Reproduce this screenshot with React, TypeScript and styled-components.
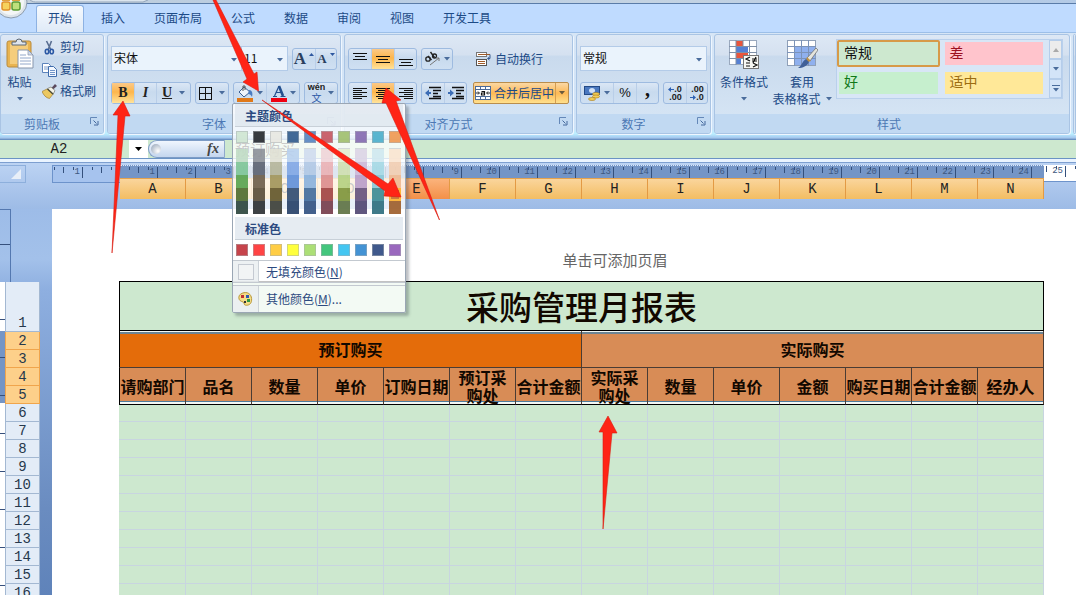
import React from "react";
import styled, { createGlobalStyle, css } from "styled-components";

const UI = `"Noto Sans CJK SC", "Noto Sans", sans-serif`;
const MONO = `"Liberation Mono", "Noto Sans CJK SC", monospace`;
const NAVY = "#1c4a86";
const GREEN = "#cde8cf";

const Global = createGlobalStyle`
  * { box-sizing: border-box; }
  body { margin: 0; overflow: hidden; font: 12px/16px ${UI}; color: ${NAVY}; background: #a5c2ea; }
  button, input, select { font: inherit; color: inherit; margin: 0; padding: 0; border: 0; background: none; border-radius: 0; }
  button { display: flex; align-items: center; justify-content: center; cursor: pointer; }
  svg { display: block; flex: none; }
`;

const Shell = styled.div`
  height: 100vh;
  display: flex;
  flex-direction: column;
  overflow: hidden;
  position: relative;
`;

/* ---------- title and tabs ---------- */
const TitleStrip = styled.div`
  height: 4px;
  flex: none;
  background: linear-gradient(90deg, #c3cfd9, #b7cce4 30%, #c4d3e2 60%, #b3cae6);
  border-bottom: 1px solid #5a7ca8;
`;
const OfficeOrb = styled.div`
  position: absolute;
  left: 0;
  top: 0;
`;
const Tabs = styled.nav`
  flex: none;
  height: 28px;
  display: flex;
  align-items: flex-end;
  gap: 5px;
  padding: 1px 0 0 36px;
  background: #bfdbff;
`;
const Tab = styled.button<{ $active?: boolean }>`
  height: 27px;
  padding: 0 12px 2px;
  border-radius: 3px 3px 0 0;
  ${(p) =>
    p.$active &&
    css`
      background: linear-gradient(#f6fafe, #dfeaf7);
      border: 1px solid #8db2e3;
      border-bottom: 0;
      padding: 0 11px 2px;
    `}
`;

/* ---------- ribbon ---------- */
const Ribbon = styled.div`
  flex: none;
  height: 107px;
  display: flex;
  align-items: flex-start;
  gap: 3px;
  padding-top: 1px;
  border-top: 1px solid #9cbfe8;
  border-bottom: 1px solid #8fb2dc;
  background: linear-gradient(#d7e6f6, #cfe3f8 90%, #bcefff 96%, #a3c6ee);
`;
const Group = styled.section<{ $w: number; $grow?: boolean }>`
  flex: ${(p) => (p.$grow ? 1 : 0)} 0 ${(p) => p.$w}px;
  height: 100px;
  display: flex;
  flex-direction: column;
  border: 1px solid #a9c4e4;
  border-radius: 3px;
  background: linear-gradient(#dde8f5, #d5e1f0 20%, #c9daed 22%, #d8e7f6);
  box-shadow: 1px 1px 0 #eef6ff;
  overflow: hidden;
`;
const GroupBody = styled.div`
  flex: 1;
  display: flex;
  padding: 11px 3px 0;
`;
const GroupLabel = styled.div`
  flex: none;
  height: 19px;
  display: flex;
  align-items: center;
  background: #c1d9f2;
  color: #4c78b4;
  span { flex: 1; text-align: center; padding-right: 6px; }
`;
const Launcher = styled.button`
  width: 11px;
  height: 11px;
  margin: 0 3px 4px 0;
`;
const Stack = styled.div`
  display: flex;
  flex-direction: column;
  gap: 11px;
`;
const Line = styled.div`
  display: flex;
  align-items: center;
  gap: 4px;
  height: 25px;
  & + & { height: 22px; }
`;
const ButtonSet = styled.div`
  display: flex;
  height: 22px;
  border: 1px solid #9ebbe0;
  border-radius: 3px;
  background: linear-gradient(#dbe7f5, #c8daee 45%, #cfe0f2);
  > * + * { border-left: 1px solid #b9cee8; }
`;
const Tool = styled.button<{ $w: number; $on?: boolean }>`
  width: ${(p) => p.$w}px;
  gap: 3px;
  background: ${(p) => (p.$on ? "linear-gradient(#fbc988, #fdb64c 45%, #ffe39a)" : "none")};
`;
const Letter = styled.span<{ $v: "b" | "i" | "u" }>`
  font: 14px/16px "Liberation Serif", serif;
  font-weight: bold;
  color: #222;
  ${(p) => p.$v === "i" && "font-style: italic;"}
  ${(p) => p.$v === "u" && "text-decoration: underline;"}
`;
const ComboWrap = styled.label<{ $w: number }>`
  position: relative;
  display: flex;
  width: ${(p) => p.$w}px;
  height: 25px;
  border: 1px solid #b3cbe8;
  background: #eaf3fc;
  & + & { margin-left: -4px; border-left: 0; }
  & + & select { padding-left: 4px; }
  svg { position: absolute; right: 4px; top: 11px; pointer-events: none; }
`;
const Combo = styled.select`
  appearance: none;
  width: 100%;
  padding: 0 2px 2px;
  color: #111;
`;
const Side = styled.div`
  display: flex;
  flex-direction: column;
  align-items: flex-start;
  gap: 6px;
`;
const TextTool = styled.button`
  height: 16px;
  gap: 3px;
  justify-content: flex-start;
`;
const BigTool = styled.button<{ $w: number }>`
  width: ${(p) => p.$w}px;
  flex-direction: column;
  justify-content: flex-start;
  line-height: 17px;
  span { display: flex; align-items: center; gap: 5px; min-height: 17px; white-space: nowrap; }
  svg + span { margin-top: 4px; }
`;
const VRule = styled.div`
  width: 1px;
  height: 56px;
  margin: 1px 3px 0;
  background: #eff6fd;
`;
const MergeTool = styled.div`
  display: flex;
  width: 96px;
  height: 22px;
  border: 1px solid #b98d4c;
  border-radius: 2px;
  background: linear-gradient(#fbd8a4, #fdb956 50%, #ffe08c);
  button { gap: 3px; }
  button:first-child { flex: 1; }
  button:last-child { width: 13px; border-left: 1px solid #d59d50; }
`;
const WrapTool = styled(TextTool)`
  height: 25px;
  padding-left: 3px;
`;
const Gallery = styled.div`
  display: flex;
  flex: 1 1 auto;
  max-width: 227px;
  height: 60px;
  margin-left: 3px;
  border: 1px solid #b9d0ec;
  background: #d8e6f6;
`;
const GalleryGrid = styled.div`
  flex: 1;
  display: grid;
  grid-template-columns: 1fr 1fr;
  gap: 3px;
  padding: 0 4px 2px 0;
`;
const StyleCell = styled.button<{ $bg: string; $fg: string; $on?: boolean }>`
  justify-content: flex-start;
  padding: 0 0 3px 5px;
  font-size: 14px;
  line-height: 18px;
  background: ${(p) => p.$bg};
  background-clip: padding-box;
  color: ${(p) => p.$fg};
  border: ${(p) => (p.$on ? "2px solid #d79a48" : "2px solid transparent")};
  border-radius: 2px;
`;
const GalleryScroll = styled.div`
  width: 13px;
  display: grid;
  grid-template-rows: repeat(3, 1fr);
  button { border: 1px solid #b5cdea; background: #d3e4f8; }
  button:first-child { background: #ececec; }
`;

/* ---------- formula bar ---------- */
const FormulaBar = styled.div`
  flex: none;
  height: 20px;
  display: flex;
  border: 1px solid #6b93c4;
  border-width: 1px 0;
  background: ${GREEN};
  color: #222;
`;
const NameBox = styled.input`
  width: 129px;
  padding-right: 11px;
  text-align: center;
  font: 14px/18px ${MONO};
`;
const NameDrop = styled.button`
  width: 19px;
  background: #fff;
`;
const FxBar = styled.button`
  width: 77px;
  border-radius: 9px 0 0 9px;
  border: 1px solid #7d9cc6;
  border-right-color: #8fa9cc;
  background: linear-gradient(#f0f6fe, #c4d6ee);
  justify-content: space-between;
  padding: 0 5px 0 2px;
  i { font: italic bold 14px/16px "Liberation Serif", serif; color: #444; }
`;
const Knob = styled.span`
  width: 10px;
  height: 10px;
  border-radius: 50%;
  background: radial-gradient(circle at 70% 70%, #fff, #8f9fb4);
`;
const FormulaInput = styled.input`
  flex: 1;
  min-width: 0;
  padding-left: 10px;
  font: 15px/18px ${UI};
  color: #222;
`;

/* ---------- workspace ---------- */
const HeadArea = styled.div`
  flex: none;
  height: 50px;
  display: grid;
  grid-template-columns: 120px 924px 1fr;
  align-items: start;
  padding-top: 6px;
  background: linear-gradient(#eaf4ff 0 3px, #7d9fd0 3px 4px, #bcd3f3 4px, #9dbbe6);
`;
const HeadLeft = styled.div`
  display: flex;
  justify-content: space-between;
`;
const SelectAll = styled.button`
  width: 26px;
  height: 18px;
  border: 1px solid #8dafdc;
  border-left: 0;
  justify-content: flex-end;
  padding: 0 4px 0 0;
`;
const RulerStrip = styled.div<{ $kind: "left" | "mid" | "right" }>`
  display: flex;
  overflow: hidden;
  ${(p) => p.$kind === "left" && "width: 68px; height: 18px; background: #a6c3ee; border: 1px solid #6d93cb; border-right: 0;"}
  ${(p) => p.$kind === "mid" && "height: 13px; background: #7495c6; border-top: 1px dotted #dce9fa; padding-right: 12px;"}
  ${(p) => p.$kind === "right" && "height: 17px; background: #fff; border-bottom: 1px solid #6d93cb;"}
`;
const RulerUnit = styled.span<{ $w?: number }>`
  flex: none;
  width: ${(p) => p.$w ?? 38}px;
  height: 12px;
  padding-right: 3px;
  text-align: right;
  font: 9px/12px ${MONO};
  color: #3d5880;
  background:
    linear-gradient(#34507c, #34507c) right 0 top 1px / 1px 11px no-repeat,
    linear-gradient(#34507c, #34507c) right 19px top 1px / 1px 6px no-repeat,
    linear-gradient(#34507c, #34507c) right 28px top 1px / 1px 3px no-repeat,
    linear-gradient(#34507c, #34507c) right 9px top 1px / 1px 3px no-repeat;
`;
const ColumnHeads = styled.div`
  display: grid;
  grid-template-columns: repeat(14, 1fr);
  height: 20px;
  border-top: 1px solid #e5a24d;
  border-bottom: 1px solid #e08a38;
`;
const ColumnHead = styled.div<{ $hot?: boolean }>`
  border-right: 1px solid #e39a44;
  text-align: center;
  font: 14px/20px ${MONO};
  color: #222;
  background: ${(p) => (p.$hot ? "linear-gradient(#fbb37c, #f39048)" : "linear-gradient(#fad59c, #f3bd62)")};
`;
const Body = styled.div`
  flex: 1;
  min-height: 0;
  display: flex;
  overflow: hidden;
  background: linear-gradient(#9dbce8, #a3c1ea 50px, #8eafe0 80px, #6a8cc0 300px, #5f83ba);
`;
const Gutter = styled.div`
  flex: none;
  width: 52px;
`;
const TopRuler = styled.div`
  width: 11px;
  height: 73px;
  border: 1px solid #5478b0;
  border-width: 1px 1px 0 0;
  background: linear-gradient(#36507c, #36507c) 0 34px / 11px 1px no-repeat;
`;
const GutterRows = styled.div`
  display: flex;
`;
const SideRuler = styled.div`
  width: 5px;
  background:
    repeating-linear-gradient(transparent 0 37px, #36507c 37px 38px),
    linear-gradient(#fff 0 49px, #7495c6 49px 121px, #fff 121px);
`;
const RowHeads = styled.div`
  width: 35px;
`;
const RowHead = styled.div<{ $on?: boolean; $tall?: boolean }>`
  height: ${(p) => (p.$tall ? 50 : 18)}px;
  display: flex;
  align-items: flex-end;
  justify-content: center;
  font: 14px/15px ${MONO};
  color: #26384c;
  border: 1px solid ${(p) => (p.$on ? "#f0a54c" : "#a3b8d2")};
  border-width: 0 1px 1px;
  background: ${(p) => (p.$on ? "#fdd08a" : "#e3ecf7")};
`;
const Page = styled.main`
  flex: none;
  width: 1126px;
  background: #fff;
  padding-left: 67px;
`;
const PageHeader = styled.div`
  height: 72px;
  margin-left: -67px;
  display: flex;
  align-items: flex-end;
  justify-content: center;
  padding-bottom: 10px;
  font-size: 15px;
  line-height: 22px;
  color: #666;
`;
const Sheet = styled.table`
  table-layout: fixed;
  width: 925px;
  border-collapse: separate;
  border-spacing: 0;
  border-top: 1px solid #000;
  background: ${GREEN};
  color: #120800;
  th, td { padding: 0; }
`;
const TitleCell = styled.th`
  height: 49px;
  border: 1px solid #000;
  border-top: 0;
  font: 500 33px/44px ${UI};
`;
const BandCell = styled.th<{ $main?: boolean }>`
  height: 37px;
  background: ${(p) => (p.$main ? "#e46c0a" : "#d88c56")};
  border: 1px solid #4a3c34;
  border-width: 0 1px 1px 0;
  box-shadow: inset 0 1px 0 #f4f8f4, inset 0 3px 0 #6c8494;
  font: bold 16px/18px ${UI};
  &:first-child { border-left: 1px solid #000; }
`;
const HeadCell = styled.th`
  height: 37px;
  background: #d88c56;
  border: 1px solid #4a3c34;
  border-width: 0 1px 1px 0;
  border-bottom-color: #000;
  box-shadow: inset 0 -2px 0 #f4f8f4, inset 0 -3px 0 #4c7c9c;
  font: bold 16px/18px ${UI};
  vertical-align: top;
  &:first-child { border-left: 1px solid #000; }
`;
const HeadText = styled.div`
  display: flex;
  flex-direction: column;
  align-items: center;
  justify-content: center;
  height: 36px;
  white-space: nowrap;
`;
const EmptyCell = styled.td<{ $first?: boolean }>`
  height: ${(p) => (p.$first ? 17 : 18)}px;
  border: 1px solid #c8d5e0;
  border-width: 0 1px 1px 0;
`;

/* ---------- colour menu ---------- */
const Menu = styled.div`
  position: absolute;
  left: 232px;
  top: 103px;
  width: 174px;
  border: 1px solid #9aa6b4;
  border-radius: 2px;
  background: rgba(255, 255, 255, 0.76);
  box-shadow: 3px 3px 3px rgba(60, 70, 80, 0.35);
  color: #2c4a80;
`;
const MenuTitle = styled.div`
  height: 23px;
  padding-left: 10px;
  margin: 0 2px;
  font-weight: bold;
  line-height: 23px;
  background: rgba(222, 230, 238, 0.75);
  border-bottom: 1px solid #c8d0d8;
`;
const SwatchRow = styled.div`
  display: grid;
  grid-template-columns: repeat(10, 12px);
  column-gap: 5px;
  padding: 4px 3px;
`;
const ShadeRow = styled(SwatchRow)`
  padding: 1px 3px 3px;
`;
const Swatch = styled.button<{ $c: string; $h?: number; $pick?: boolean }>`
  height: ${(p) => p.$h ?? 12}px;
  width: 12px;
  background: ${(p) => p.$c};
  opacity: 0.9;
  ${(p) => !p.$h && "border: 1px solid rgba(160, 165, 170, 0.5);"}
  ${(p) => p.$pick && "border: 2px solid #ffb02a;"}
`;
const Shades = styled.div`
  border-top: 1px solid rgba(190, 195, 200, 0.6);
  width: 12px;
`;
const MenuItem = styled.button<{ $h: number }>`
  width: 100%;
  height: ${(p) => p.$h}px;
  justify-content: flex-start;
  border-top: 1px solid #c3c9d0;
  u { text-underline-offset: 1px; }
`;
const MenuIcon = styled.span`
  display: flex;
  align-items: center;
  justify-content: center;
  align-self: stretch;
  width: 26px;
  margin-right: 7px;
  border-right: 1px solid #ccd2d8;
  background: rgba(232, 238, 240, 0.8);
`;
const NoFill = styled.span`
  width: 16px;
  height: 16px;
  border: 1px solid #c5cad2;
  background: #f2f4f5;
`;
const MenuGap = styled.div`
  height: 3px;
  border-top: 1px solid #c3c9d0;
`;
const Pointers = styled.svg`
  position: absolute;
  left: 0;
  top: 0;
  pointer-events: none;
`;

/* ---------- drawings ---------- */
const Caret = ({ c = "#4a6c9c" }: { c?: string }) => (
  <svg width="6" height="4" viewBox="0 0 6 4"><path d="M0 0h6L3 3.5z" fill={c} /></svg>
);
const VLines = ({ y }: { y: number }) => (
  <svg width="14" height="16" viewBox="0 0 14 16" shapeRendering="crispEdges" stroke="#111">
    <path d={`M0 ${y}.5h14M2 ${y + 3}.5h10M0 ${y + 6}.5h14`} />
  </svg>
);
const HLines = ({ a }: { a: "l" | "c" | "r" }) => {
  const x = a === "l" ? 0 : a === "c" ? 2 : 5;
  const w = a === "c" ? 10 : 9;
  return (
    <svg width="14" height="14" viewBox="0 0 14 14" shapeRendering="crispEdges">
      {[0, 1, 2, 3, 4, 5].map((i) => (
        <rect key={i} x={i % 2 ? x : 0} y={2 + i * 2} width={i % 2 ? w : 14} height="1" fill="#111" />
      ))}
    </svg>
  );
};
const Indent = ({ flip }: { flip?: boolean }) => (
  <svg width="16" height="14" viewBox="0 0 16 14">
    <path d="M4 1.5h12M8 4.5h8M8 7.500h5M8 10.500h8M4 12.500h12" stroke="#111" strokeWidth="1.300" />
    <path d={flip ? "M0 6h2V3.500l4 3.500-4 3.500V8H0z" : "M6 6H4V3.500L0 7l4 3.500V8h2z"} fill="#3b6cb5" />
  </svg>
);
const LauncherIcon = () => (
  <svg width="9" height="9" viewBox="0 0 9 9" fill="none" stroke="#6488b8">
    <path d="M.5 7V.5H7" /><path d="M3.500 3.500l3 3M8 4v4H4" stroke="#44689c" />
  </svg>
);
const PasteIcon = () => (
  <svg width="28" height="31" viewBox="0 0 28 31">
    <rect x="1" y="3" width="24" height="26" rx="2" fill="#e9b450" stroke="#b98a3c" />
    <rect x="4" y="6" width="18" height="20" fill="#f5cd7c" />
    <path d="M6 7V4h4a3 3 0 0 1 6 0h4v3z" fill="#dfe5ec" stroke="#5c6876" />
    <path d="M12 12h10l5 5v13H12z" fill="#fff" stroke="#8695ac" />
    <path d="M22 12v5h5z" fill="#cfd9ea" stroke="#8695ac" strokeWidth=".7" />
    <path d="M14 17h6M14 20h11M14 23h11M14 26h11" stroke="#93a8ca" />
  </svg>
);
const CutIcon = () => (
  <svg width="15" height="15" viewBox="0 0 15 15" fill="none">
    <path d="M4.500 1l4.500 9M9.500 1L6 10" stroke="#5a6f92" strokeWidth="1.600" />
    <ellipse cx="5" cy="11.500" rx="1.700" ry="2.300" stroke="#2b58a4" strokeWidth="1.600" /><ellipse cx="9.700" cy="11.500" rx="1.700" ry="2.300" stroke="#2b58a4" strokeWidth="1.600" />
  </svg>
);
const CopyIcon = () => (
  <svg width="15" height="15" viewBox="0 0 15 15">
    <path d="M.5 1.500h6l2 2v7h-8z" fill="#fff" stroke="#5c83bb" /><path d="M2 5h4M2 7h4" stroke="#7f9fcc" />
    <path d="M6.500 4.500h5l3 3v7h-8z" fill="#f3f8ff" stroke="#3f6cac" /><path d="M8 8.500h5M8 10.500h5M8 12.500h5" stroke="#6f94c8" />
  </svg>
);
const BrushIcon = () => (
  <svg width="15" height="15" viewBox="0 0 15 15">
    <path d="M9 4.500L13 0l2 2-4.500 4z" fill="#5a4a5e" />
    <path d="M0 7.500L5 5l6 5-3.500 4.500C4 14 1.500 11 0 7.500z" fill="#ecc860" stroke="#a08038" strokeWidth=".7" />
    <path d="M5.500 4.500L9 3l4 3.500-2 4z" fill="#f4f2e6" stroke="#77776c" strokeWidth=".7" />
    <path d="M5.500 5l5.500 5" stroke="#4c4c38" strokeWidth="1.300" />
  </svg>
);
const GridIcon = () => (
  <svg width="13" height="13" viewBox="0 0 13 13" fill="none" stroke="#111" shapeRendering="crispEdges"><path d="M.5.5h12v12H.5zM6.500 0v13M0 6.500h13" /></svg>
);
const BucketIcon = () => (
  <svg width="17" height="17" viewBox="0 0 17 17">
    <path d="M2 7l5-5 6 5-6 5z" fill="#eef4fb" stroke="#3d5f92" /><path d="M6 6V1h2v4" fill="none" stroke="#555" />
    <path d="M12 5c3 0 4 3 3 7-1-2-2-3-4-3z" fill="#4a7bc0" /><rect y="13" width="16" height="4" fill="#e07818" />
  </svg>
);
const FontColorIcon = () => (
  <svg width="16" height="17" viewBox="0 0 16 17"><path d="M3.500 11L8 1" fill="none" stroke="#24508f" strokeWidth="1.200" /><path d="M8 1l4 10" stroke="#24508f" strokeWidth="2.600" /><path d="M5 7.500h6M2 11.500h4M9.500 11.500h5" stroke="#24508f" /><rect y="13" width="16" height="4" fill="#f00010" /></svg>
);
const SizeA = styled.span<{ $s: number }>`
  font: bold ${(p) => p.$s}px/18px "Liberation Serif", serif;
  color: #2b3f5e;
`;
const Tick = ({ up }: { up?: boolean }) => (
  <svg width="5" height="12" viewBox="0 0 5 12"><path d={up ? "M0 3h5L2.500 0z" : "M0 0h5L2.500 3z"} fill="#2e58a0" /></svg>
);
const WenMark = styled.span`
  display: flex;
  flex-direction: column;
  align-items: center;
  font-size: 10px;
  line-height: 11px;
  color: #2c57a5;
  b { font: bold 9px/9px "Liberation Sans", sans-serif; color: #222; }
`;
const OrientIcon = () => (
  <svg width="17" height="16" viewBox="0 0 17 16" fill="none" stroke="#222">
    <circle cx="4" cy="8" r="2.200" strokeWidth="1.300" /><path d="M4 5l3.500 4M6.500 1l4 5.500" strokeWidth="1.400" /><circle cx="10.500" cy="5" r="2" strokeWidth="1.300" />
    <path d="M6 14l9-7M15 7h-3M15 7v3" stroke="#777" />
  </svg>
);
const WrapIcon = () => (
  <svg width="16" height="16" viewBox="0 0 16 16" fill="none">
    <rect x=".5" y="1.500" width="10" height="4" fill="#fff" stroke="#777" /><rect x=".5" y="8.500" width="10" height="6" fill="#fff" stroke="#555" />
    <path d="M2 3.500h12M2 10.500h7M2 12.500h7" stroke="#a05a28" /><path d="M14 3.500v4h-2M13.500 6l-2 1.500 2 1.500" stroke="#3a5c90" />
  </svg>
);
const MergeIcon = () => (
  <svg width="16" height="14" viewBox="0 0 16 14" fill="none">
    <rect x=".5" y=".5" width="15" height="13" fill="#fff" stroke="#4d6b98" /><path d="M0 3.500h16M0 10.500h16M5.500 0v3M10.500 0v3M5.500 11v3M10.500 11v3" stroke="#4d6b98" />
    <path d="M1 7h3M12 7h3M3 5.500L4.500 7 3 8.500M13 5.500L11.500 7 13 8.500" stroke="#222" /><path d="M6.500 5.500h3v3.500h-3v-2h3" stroke="#111" strokeWidth="1.200" />
  </svg>
);
const MoneyIcon = () => (
  <svg width="17" height="16" viewBox="0 0 17 16">
    <rect x=".5" y="1.500" width="15" height="8" fill="#4a78bf" stroke="#244a86" /><ellipse cx="8" cy="5.500" rx="3" ry="2.500" fill="#cfe0f6" />
    <ellipse cx="12" cy="9" rx="3.500" ry="1.500" fill="#f3cf5a" stroke="#a87a18" strokeWidth=".6" /><ellipse cx="12" cy="11.500" rx="3.500" ry="1.500" fill="#f3cf5a" stroke="#a87a18" strokeWidth=".6" /><ellipse cx="8" cy="14" rx="3.500" ry="1.500" fill="#f3cf5a" stroke="#a87a18" strokeWidth=".6" />
  </svg>
);
const Decimal = styled.span`
  display: flex;
  flex-direction: column;
  align-items: flex-end;
  font: bold 9px/8px "Liberation Sans", sans-serif;
  color: #222;
  span { display: flex; align-items: center; }
`;
const MiniArrow = ({ right }: { right?: boolean }) => (
  <svg width="6" height="5" viewBox="0 0 6 5"><path d={right ? "M0 2h3V0l3 2.500L3 5V3H0z" : "M6 2H3V0L0 2.500 3 5V3h3z"} fill="#2e62b4" /></svg>
);
const CondIcon = () => (
  <svg width="30" height="29" viewBox="0 0 30 29">
    <rect x=".5" y=".5" width="27" height="24" fill="#fff" stroke="#9aa9be" />
    <rect x="7" y="1" width="7" height="5" fill="#e8553c" /><rect x="7" y="7" width="12" height="5" fill="#5580d4" /><rect x="7" y="13" width="12" height="5" fill="#e8553c" /><rect x="7" y="19" width="5" height="5" fill="#5580d4" />
    <path d="M0 6.500h28M0 12.500h28M0 18.500h28M7 0v25M14 0v7M20.500 0v25" stroke="#7f90a8" fill="none" />
    <rect x="14.500" y="15.500" width="15" height="13" fill="#f8f8f4" stroke="#777" />
    <path d="M21 17l-4 2 4 2M17 23h4M17 26h4M23 19h5M23 21h5M27 17l-3 6M24 23l4 2-4 2" stroke="#111" fill="none" strokeWidth="1.200" />
  </svg>
);
const FormatTableIcon = () => (
  <svg width="31" height="29" viewBox="0 0 31 29">
    <rect x=".5" y=".5" width="28" height="25" fill="#fff" stroke="#8fa0b8" /><rect x="8" y="7" width="20" height="18" fill="#8fb0ee" />
    <path d="M0 6.500h29M0 12.500h29M0 18.500h29M7.500 0v26M14.500 0v26M21.500 0v26" stroke="#7c93b8" fill="none" />
    <path d="M29 8l2 2-8 11-3-3z" fill="#e4e4dc" stroke="#666" strokeWidth=".7" /><path d="M20 17l4 4-3 1-2-2z" fill="#c09040" /><path d="M19 19l3 3c-2 4-6 6-11 6 4-2 4-7 8-9z" fill="#3f5f98" />
  </svg>
);
const PaletteIcon = () => (
  <svg width="15" height="14" viewBox="0 0 15 14">
    <path d="M6 .7c5-1 8 3 7.600 7.500-.3 4-3 5.300-6 5-2-.2-1-2.500-2.500-3.200C3 9.300.8 8.500.8 5.500.8 3 3 1.200 6 .7z" fill="#f4dc88" stroke="#b89838" />
    <rect x="3" y="3" width="3" height="3" fill="#c03030" /><rect x="8" y="3" width="3" height="3" fill="#2f5ab0" /><rect x="9" y="7" width="3" height="3" fill="#2f9a40" /><rect x="6" y="9" width="2" height="2" fill="#333" />
  </svg>
);

/* ---------- data ---------- */
const THEME: string[][] = [
  ["#cfe6d2", "#c0dcc5", "#7cc496", "#56a24c", "#4d6a2c", "#29423a"],
  ["#22272c", "#8c9098", "#5a6070", "#6b5c48", "#564a36", "#282c30"],
  ["#e8e8e2", "#e0e0d4", "#b4b498", "#a09458", "#605428", "#3a3c34"],
  ["#2f5a8c", "#b8d0ee", "#7fa6e4", "#5f8fd8", "#2f4a70", "#243e66"],
  ["#5584c0", "#cfdcee", "#b0c8e4", "#88b0dc", "#3f6a9c", "#2f4f80"],
  ["#c65560", "#f0d4d8", "#eab0b4", "#dc8c8c", "#a04040", "#743a48"],
  ["#a0bf6c", "#e2ecd0", "#cfdfb0", "#b4d080", "#7c9438", "#5c7040"],
  ["#8469b0", "#dcd4e6", "#ccb8d8", "#b89cc8", "#64507c", "#4e4470"],
  ["#4aaecb", "#cfe8f0", "#a4d8e4", "#86c8d8", "#3a8a94", "#2a6c7c"],
  ["#f09850", "#fae4d0", "#f2cdb0", "#eeb890", "#c87030", "#9c5c28"],
];
const STANDARD = ["#c03038", "#ff3030", "#ffc830", "#ffff28", "#a4dc68", "#30c070", "#30c0f0", "#3088d0", "#2c4880", "#9058b8"];
const COLS = "ABCDEFGHIJKLMN".split("");
const HEADS = ["请购部门", "品名", "数量", "单价", "订购日期", "预订采\n购处", "合计金额", "实际采\n购处", "数量", "单价", "金额", "购买日期", "合计金额", "经办人"];
const TABS = ["开始", "插入", "页面布局", "公式", "数据", "审阅", "视图", "开发工具"];

const Label = ({ text, plain }: { text: string; plain?: boolean }) => (
  <GroupLabel>
    <span>{text}</span>
    {!plain && <Launcher aria-label={`${text}设置`}><LauncherIcon /></Launcher>}
  </GroupLabel>
);
const Select = ({ w, label, value }: { w: number; label: string; value: string }) => (
  <ComboWrap $w={w}>
    <Combo aria-label={label} defaultValue={value}><option>{value}</option></Combo>
    <Caret />
  </ComboWrap>
);

const ClipArea = styled(GroupBody)`
  gap: 7px;
  padding: 3px 3px 0;
  > div { margin-top: 1px; }
`;
const StyleBody = styled(GroupBody)`
  padding: 4px 6px 0 2px;
  ${BigTool} { margin-top: 1px; }
`;
const Gap = styled.span`
  width: 1px;
`;
const Percent = styled.span`
  font: 13px/16px "Liberation Sans", sans-serif;
  color: #111;
`;
const Comma = styled.span`
  font: bold 20px/10px "Liberation Serif", serif;
  color: #111;
  padding-bottom: 8px;
`;

const RibbonBar = () => (
  <Ribbon>
    <Group $w={104}>
      <ClipArea>
        <BigTool $w={31}><PasteIcon /><span>粘贴</span><span><Caret /></span></BigTool>
        <Side>
          <TextTool><CutIcon />剪切</TextTool>
          <TextTool><CopyIcon />复制</TextTool>
          <TextTool><BrushIcon />格式刷</TextTool>
        </Side>
      </ClipArea>
      <Label text="剪贴板" />
    </Group>

    <Group $w={234}>
      <GroupBody>
        <Stack>
          <Line>
            <Select w={131} label="字体" value="宋体" />
            <Select w={46} label="字号" value="11" />
            <ButtonSet>
              <Tool $w={22} aria-label="增大字号"><SizeA $s={17}>A</SizeA><Tick up /></Tool>
              <Tool $w={21} aria-label="减小字号"><SizeA $s={13}>A</SizeA><Tick /></Tool>
            </ButtonSet>
          </Line>
          <Line>
            <ButtonSet>
              <Tool $w={22} $on aria-label="加粗"><Letter $v="b">B</Letter></Tool>
              <Tool $w={22}><Letter $v="i">I</Letter></Tool>
              <Tool $w={34}><Letter $v="u">U</Letter><Gap /><Caret /></Tool>
            </ButtonSet>
            <ButtonSet><Tool $w={32} aria-label="边框"><GridIcon /><Gap /><Caret /></Tool></ButtonSet>
            <ButtonSet>
              <Tool $w={32} aria-label="填充颜色"><BucketIcon /><Caret /></Tool>
              <Tool $w={33} aria-label="字体颜色"><FontColorIcon /><Caret /></Tool>
            </ButtonSet>
            <ButtonSet><Tool $w={32} aria-label="拼音"><WenMark><b>wén</b>文</WenMark><Caret /></Tool></ButtonSet>
          </Line>
        </Stack>
      </GroupBody>
      <Label text="字体" />
    </Group>

    <Group $w={229}>
      <GroupBody>
        <Stack>
          <Line>
            <ButtonSet>
              <Tool $w={22} aria-label="顶端对齐"><VLines y={2} /></Tool>
              <Tool $w={23} $on aria-label="垂直居中"><VLines y={5} /></Tool>
              <Tool $w={22} aria-label="底端对齐"><VLines y={8} /></Tool>
            </ButtonSet>
            <ButtonSet><Tool $w={30} aria-label="方向"><OrientIcon /><Caret /></Tool></ButtonSet>
          </Line>
          <Line>
            <ButtonSet>
              <Tool $w={22} aria-label="左对齐"><HLines a="l" /></Tool>
              <Tool $w={23} $on aria-label="居中"><HLines a="c" /></Tool>
              <Tool $w={22} aria-label="右对齐"><HLines a="r" /></Tool>
            </ButtonSet>
            <ButtonSet>
              <Tool $w={22} aria-label="减少缩进"><Indent /></Tool>
              <Tool $w={22} aria-label="增加缩进"><Indent flip /></Tool>
            </ButtonSet>
          </Line>
        </Stack>
        <VRule />
        <Stack>
          <WrapTool><WrapIcon />自动换行</WrapTool>
          <MergeTool>
            <button><MergeIcon />合并后居中</button>
            <button aria-label="合并选项"><Caret c="#6a5a3c" /></button>
          </MergeTool>
        </Stack>
      </GroupBody>
      <Label text="对齐方式" />
    </Group>

    <Group $w={135}>
      <GroupBody>
        <Stack>
          <Line><Select w={127} label="数字格式" value="常规" /></Line>
          <Line>
            <ButtonSet>
              <Tool $w={32} aria-label="会计数字格式"><MoneyIcon /><Caret /></Tool>
              <Tool $w={23}><Percent>%</Percent></Tool>
              <Tool $w={22}><Comma>,</Comma></Tool>
            </ButtonSet>
            <ButtonSet>
              <Tool $w={22} aria-label="增加小数位数"><Decimal><span><MiniArrow />.0</span><span>.00</span></Decimal></Tool>
              <Tool $w={21} aria-label="减少小数位数"><Decimal><span>.00</span><span><MiniArrow right />.0</span></Decimal></Tool>
            </ButtonSet>
          </Line>
        </Stack>
      </GroupBody>
      <Label text="数字" />
    </Group>

    <Group $w={340} $grow>
      <StyleBody>
        <BigTool $w={54}><CondIcon /><span>条件格式</span><span><Caret /></span></BigTool>
        <BigTool $w={62}><FormatTableIcon /><span>套用</span><span>表格格式 <Caret /></span></BigTool>
        <Gallery>
          <GalleryGrid>
            <StyleCell $bg={GREEN} $fg="#111" $on>常规</StyleCell>
            <StyleCell $bg="#ffc4cc" $fg="#9c1020">差</StyleCell>
            <StyleCell $bg="#c6efce" $fg="#107818">好</StyleCell>
            <StyleCell $bg="#ffe898" $fg="#9c6c10">适中</StyleCell>
          </GalleryGrid>
          <GalleryScroll>
            <button aria-label="上一行"><svg width="6" height="4" viewBox="0 0 6 4"><path d="M0 4h6L3 0z" fill="#aaa" /></svg></button>
            <button aria-label="下一行"><Caret /></button>
            <button aria-label="更多"><svg width="8" height="7" viewBox="0 0 8 7"><path d="M0 .5h8" stroke="#4a6c9c" /><path d="M1 3h6L4 6.500z" fill="#4a6c9c" /></svg></button>
          </GalleryScroll>
        </Gallery>
      </StyleBody>
      <Label text="样式" plain />
    </Group>
    <Group $w={3} />
  </Ribbon>
);

const FillMenu = () => (
  <Menu role="menu">
    <MenuTitle>主题颜色</MenuTitle>
    <SwatchRow>{THEME.map((c, i) => <Swatch key={i} $c={c[0]} aria-label={`主题颜色 ${i + 1}`} />)}</SwatchRow>
    <ShadeRow>
      {THEME.map((c, i) => (
        <Shades key={i}>
          {c.slice(1).map((s, j) => <Swatch key={j} $c={s} $h={13} $pick={i === 9 && j === 3} aria-label={`颜色 ${i + 1}-${j + 1}`} />)}
        </Shades>
      ))}
    </ShadeRow>
    <MenuTitle>标准色</MenuTitle>
    <SwatchRow>{STANDARD.map((c, i) => <Swatch key={i} $c={c} aria-label={`标准色 ${i + 1}`} />)}</SwatchRow>
    <MenuItem $h={22}><MenuIcon><NoFill /></MenuIcon><span>无填充颜色(<u>N</u>)</span></MenuItem>
    <MenuGap />
    <MenuItem $h={27}><MenuIcon><PaletteIcon /></MenuIcon><span>其他颜色(<u>M</u>)...</span></MenuItem>
  </Menu>
);

export default function App() {
  return (
    <Shell>
      <Global />
      <TitleStrip />
      <Tabs>
        {TABS.map((t, i) => <Tab key={t} $active={i === 0}>{t}</Tab>)}
      </Tabs>
      <OfficeOrb>
        <svg width="150" height="20" viewBox="0 0 150 20">
          <path d="M30 0c3 2 4 2 8 2h105l5-2" fill="#dbe5ee" stroke="#93a5ba" />
          <circle cx="11" cy="2" r="16" fill="#dde4ea" stroke="#8c9cae" />
          <circle cx="11" cy="2" r="13" fill="#f4f6f6" />
          <rect x="2" y="2" width="8" height="8" rx="2" fill="#f6d25c" stroke="#e0922c" strokeWidth="1.500" /><rect x="12" y="2" width="8" height="8" rx="2" fill="#bfe07c" stroke="#5c9c34" strokeWidth="1.500" />
          <path d="M2 0h8M12 0h8" stroke="#e0a03c" strokeWidth="2" />
        </svg>
      </OfficeOrb>
      <RibbonBar />
      <FormulaBar>
        <NameBox aria-label="名称框" defaultValue="A2" />
        <NameDrop aria-label="名称列表"><svg width="7" height="4" viewBox="0 0 7 4"><path d="M0 0h7L3.500 4z" fill="#000" /></svg></NameDrop>
        <FxBar aria-label="插入函数"><Knob /><i>fx</i></FxBar>
        <FormulaInput aria-label="编辑栏" defaultValue="预订购买" />
      </FormulaBar>
      <HeadArea>
        <HeadLeft>
          <SelectAll aria-label="全选"><svg width="10" height="10" viewBox="0 0 10 10"><path d="M10 0v10H0z" fill="#e8eff8" /></svg></SelectAll>
          <RulerStrip $kind="left"><RulerUnit $w={30}>1</RulerUnit><RulerUnit /></RulerStrip>
        </HeadLeft>
        <div>
          <RulerStrip $kind="mid">{Array.from({ length: 24 }, (_, i) => <RulerUnit key={i}>{i + 1}</RulerUnit>)}</RulerStrip>
          <ColumnHeads>{COLS.map((c) => <ColumnHead key={c} $hot={c === "E"}>{c}</ColumnHead>)}</ColumnHeads>
        </div>
        <RulerStrip $kind="right"><RulerUnit $w={22}>25</RulerUnit><RulerUnit /></RulerStrip>
      </HeadArea>
      <Body>
        <Gutter>
          <TopRuler />
          <GutterRows>
            <SideRuler />
            <RowHeads>
              {Array.from({ length: 16 }, (_, i) => <RowHead key={i} $tall={i === 0} $on={i > 0 && i < 5}>{i + 1}</RowHead>)}
            </RowHeads>
          </GutterRows>
        </Gutter>
        <Page>
          <PageHeader>单击可添加页眉</PageHeader>
          <Sheet>
            <colgroup><col width="67" />{COLS.slice(1).map((c) => <col key={c} width="66" />)}</colgroup>
            <thead>
              <tr><TitleCell colSpan={14}>采购管理月报表</TitleCell></tr>
              <tr><BandCell colSpan={7} $main>预订购买</BandCell><BandCell colSpan={7}>实际购买</BandCell></tr>
              <tr>
                {HEADS.map((h, i) => (
                  <HeadCell key={i}><HeadText>{h.split("\n").map((l) => <span key={l}>{l}</span>)}</HeadText></HeadCell>
                ))}
              </tr>
            </thead>
            <tbody>
              {Array.from({ length: 11 }, (_, r) => (
                <tr key={r}>{COLS.map((c) => <EmptyCell key={c} $first={r === 0} />)}</tr>
              ))}
            </tbody>
          </Sheet>
        </Page>
      </Body>
      <FillMenu />
      <Pointers width="640" height="540" viewBox="0 0 640 540" fill="#ff2416" stroke="#d81c10" strokeWidth=".6">
        <path d="M112 253L118 115l-5 0L123 101l7 15h-5z" />
        <path d="M213 0h3L254 74l3-2 1.500 19L243 82l4-3z" />
        <path d="M262 100L388 184l5-6 8 19-17-1 1-5z" />
        <path d="M439.500 220L386 103l-4 0 4-15 15 12-5 1z" />
        <path d="M603 529L603 432h-4l9-16 9 17h-5z" />
      </Pointers>
    </Shell>
  );
}
